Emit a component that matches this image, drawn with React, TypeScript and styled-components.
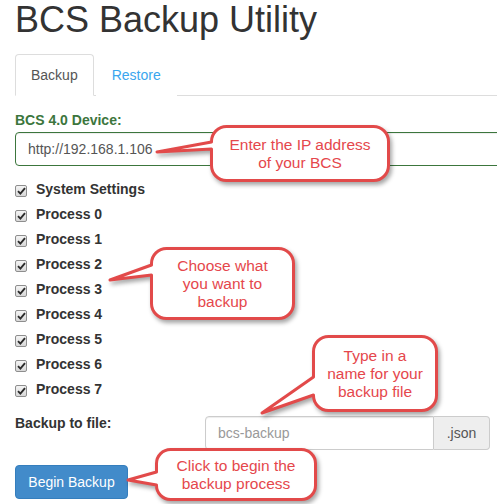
import React from "react";
import styled, { createGlobalStyle } from "styled-components";

const GlobalStyle = createGlobalStyle`
  html, body {
    margin: 0;
    padding: 0;
    background: #fff;
    overflow: hidden;
  }
  body {
    font-family: "Liberation Sans", Arial, sans-serif;
    font-size: 14px;
    color: #333;
  }
  * { box-sizing: border-box; }
`;

const Page = styled.div`
  position: relative;
  width: 497px;
  height: 504px;
  padding-left: 15px;
  overflow: hidden;
`;

const Title = styled.h1`
  margin: 0;
  font-size: 36px;
  font-weight: normal;
  line-height: 40px;
  color: #333;
  white-space: nowrap;
`;

const Tabs = styled.ul`
  display: flex;
  margin: 14px 0 0;
  padding: 0;
  list-style: none;
  border-bottom: 1px solid #ddd;
`;

const Tab = styled.li<{ $active?: boolean }>`
  margin-bottom: -1px;
  margin-right: 2px;
  padding: 10px 15px;
  line-height: 20px;
  border: 1px solid ${(p) => (p.$active ? "#ddd" : "transparent")};
  border-bottom-color: ${(p) => (p.$active ? "#fff" : "transparent")};
  border-radius: 4px 4px 0 0;
  background: #fff;
  color: ${(p) => (p.$active ? "#555" : "#3aa6ee")};
`;

const Form = styled.form`
  margin-top: 14px;
  display: flex;
  flex-direction: column;
`;

const DeviceLabel = styled.label`
  display: block;
  font-weight: bold;
  color: #3c763d;
  line-height: 20px;
  margin-bottom: 2px;
`;

const DeviceInput = styled.input`
  width: 560px;
  height: 34px;
  padding: 6px 12px;
  border: 1px solid #3c763d;
  border-radius: 4px;
  font-family: inherit;
  font-size: 14px;
  color: #555;
  box-shadow: inset 0 1px 1px rgba(0, 0, 0, 0.075);
  outline: none;
`;

const CheckList = styled.div`
  margin-top: 13px;
  display: flex;
  flex-direction: column;
  gap: 5px;
`;

const CheckRow = styled.label`
  display: flex;
  align-items: center;
  height: 20px;
  font-weight: bold;
  color: #333;
  line-height: 20px;
`;

const CheckBox = styled.span`
  display: inline-flex;
  align-items: center;
  justify-content: center;
  width: 12px;
  height: 12px;
  margin-top: 4px;
  margin-right: 9px;
  border: 1px solid #8e8e8e;
  border-radius: 2px;
  background: linear-gradient(#f4f4f4, #d8d8d8);
`;

const FileRow = styled.div`
  margin-top: 17px;
  display: flex;
  align-items: flex-start;
`;

const FileLabel = styled.label`
  width: 190px;
  padding-top: 0;
  font-weight: bold;
  line-height: 14px;
  color: #333;
`;

const InputGroup = styled.div`
  display: flex;
  width: 285px;
`;

const FileInput = styled.input`
  flex: 1;
  min-width: 0;
  height: 34px;
  padding: 6px 12px;
  border: 1px solid #ccc;
  border-radius: 4px 0 0 4px;
  font-family: inherit;
  font-size: 14px;
  color: #555;
  box-shadow: inset 0 1px 1px rgba(0, 0, 0, 0.075);
  outline: none;
  &::placeholder { color: #999; }
`;

const Addon = styled.span`
  width: 56px;
  height: 34px;
  display: flex;
  align-items: center;
  justify-content: center;
  background: #eee;
  border: 1px solid #ccc;
  border-left: 0;
  border-radius: 0 4px 4px 0;
  color: #555;
  font-size: 14px;
`;

const Button = styled.button`
  margin-top: 15px;
  align-self: flex-start;
  width: 113px;
  height: 34px;
  padding: 6px 12px;
  background: #428bca;
  border: 1px solid #357ebd;
  border-radius: 4px;
  color: #fff;
  font-family: inherit;
  font-size: 14px;
  line-height: 20px;
`;

const CalloutBox = styled.div<{ $x: number; $y: number; $w: number; $h: number }>`
  position: absolute;
  left: ${(p) => p.$x}px;
  top: ${(p) => p.$y}px;
  width: ${(p) => p.$w}px;
  height: ${(p) => p.$h}px;
`;

const CalloutShape = styled.svg`
  position: absolute;
  left: 0;
  top: 0;
  overflow: visible;
  filter: drop-shadow(2px 3px 2px rgba(0, 0, 0, 0.35));
`;

const CalloutText = styled.div`
  position: relative;
  height: 100%;
  display: flex;
  align-items: center;
  justify-content: center;
  text-align: center;
  font-size: 15.5px;
  line-height: 18px;
  color: #e5474c;
`;

type CalloutProps = {
  x: number;
  y: number;
  w: number;
  h: number;
  r: number;
  b1: number;
  b2: number;
  tx: number;
  ty: number;
  lines: string[];
};

function bubblePath(w: number, h: number, r: number, b1: number, b2: number, tx: number, ty: number) {
  const i = 1.5;
  const W = w - i;
  const H = h - i;
  return `M ${i + r} ${i} H ${W - r} A ${r} ${r} 0 0 1 ${W} ${i + r} V ${H - r} A ${r} ${r} 0 0 1 ${W - r} ${H} H ${i + r} A ${r} ${r} 0 0 1 ${i} ${H - r} V ${b2} L ${tx} ${ty} L ${i} ${b1} V ${i + r} A ${r} ${r} 0 0 1 ${i + r} ${i} Z`;
}

function Callout({ x, y, w, h, r, b1, b2, tx, ty, lines }: CalloutProps) {
  return (
    <CalloutBox $x={x} $y={y} $w={w} $h={h}>
      <CalloutShape width={w} height={h} viewBox={`0 0 ${w} ${h}`}>
        <path
          d={bubblePath(w, h, r, b1, b2, tx, ty)}
          fill="#fff"
          stroke="#e24a4a"
          strokeWidth={3}
          strokeLinejoin="round"
        />
      </CalloutShape>
      <CalloutText>
        <div>
          {lines.map((l) => (
            <div key={l}>{l}</div>
          ))}
        </div>
      </CalloutText>
    </CalloutBox>
  );
}

function Check() {
  return (
    <CheckBox>
      <svg width="9" height="8" viewBox="0 0 9 8">
        <path d="M1 4.2 L3.4 6.6 L8 1.2" fill="none" stroke="#2b2b2b" strokeWidth="1.9" />
      </svg>
    </CheckBox>
  );
}

const items = [
  "System Settings",
  "Process 0",
  "Process 1",
  "Process 2",
  "Process 3",
  "Process 4",
  "Process 5",
  "Process 6",
  "Process 7",
];

export default function App() {
  return (
    <>
      <GlobalStyle />
      <Page>
        <Title>BCS Backup Utility</Title>
        <Tabs>
          <Tab $active>Backup</Tab>
          <Tab>Restore</Tab>
        </Tabs>
        <Form onSubmit={(e) => e.preventDefault()}>
          <DeviceLabel>BCS 4.0 Device:</DeviceLabel>
          <DeviceInput readOnly value="http://192.168.1.106" />
          <CheckList>
            {items.map((it) => (
              <CheckRow key={it}>
                <Check />
                {it}
              </CheckRow>
            ))}
          </CheckList>
          <FileRow>
            <FileLabel>Backup to file:</FileLabel>
            <InputGroup>
              <FileInput placeholder="bcs-backup" />
              <Addon>.json</Addon>
            </InputGroup>
          </FileRow>
          <Button type="button">Begin Backup</Button>
        </Form>

        <Callout x={210} y={125} w={180} h={57} r={15} b1={17} b2={24} tx={-53} ty={27}
          lines={["Enter the IP address", "of your BCS"]} />
        <Callout x={150} y={247} w={145} h={73} r={15} b1={18} b2={28} tx={-40} ty={33}
          lines={["Choose what", "you want to", "backup"]} />
        <Callout x={312} y={335} w={126} h={77} r={15} b1={42} b2={60} tx={-50} ty={78}
          lines={["Type in a", "name for your", "backup file"]} />
        <Callout x={155} y={448} w={162} h={53} r={14} b1={24} b2={37} tx={-27} ty={32}
          lines={["Click to begin the", "backup process"]} />
      </Page>
    </>
  );
}
